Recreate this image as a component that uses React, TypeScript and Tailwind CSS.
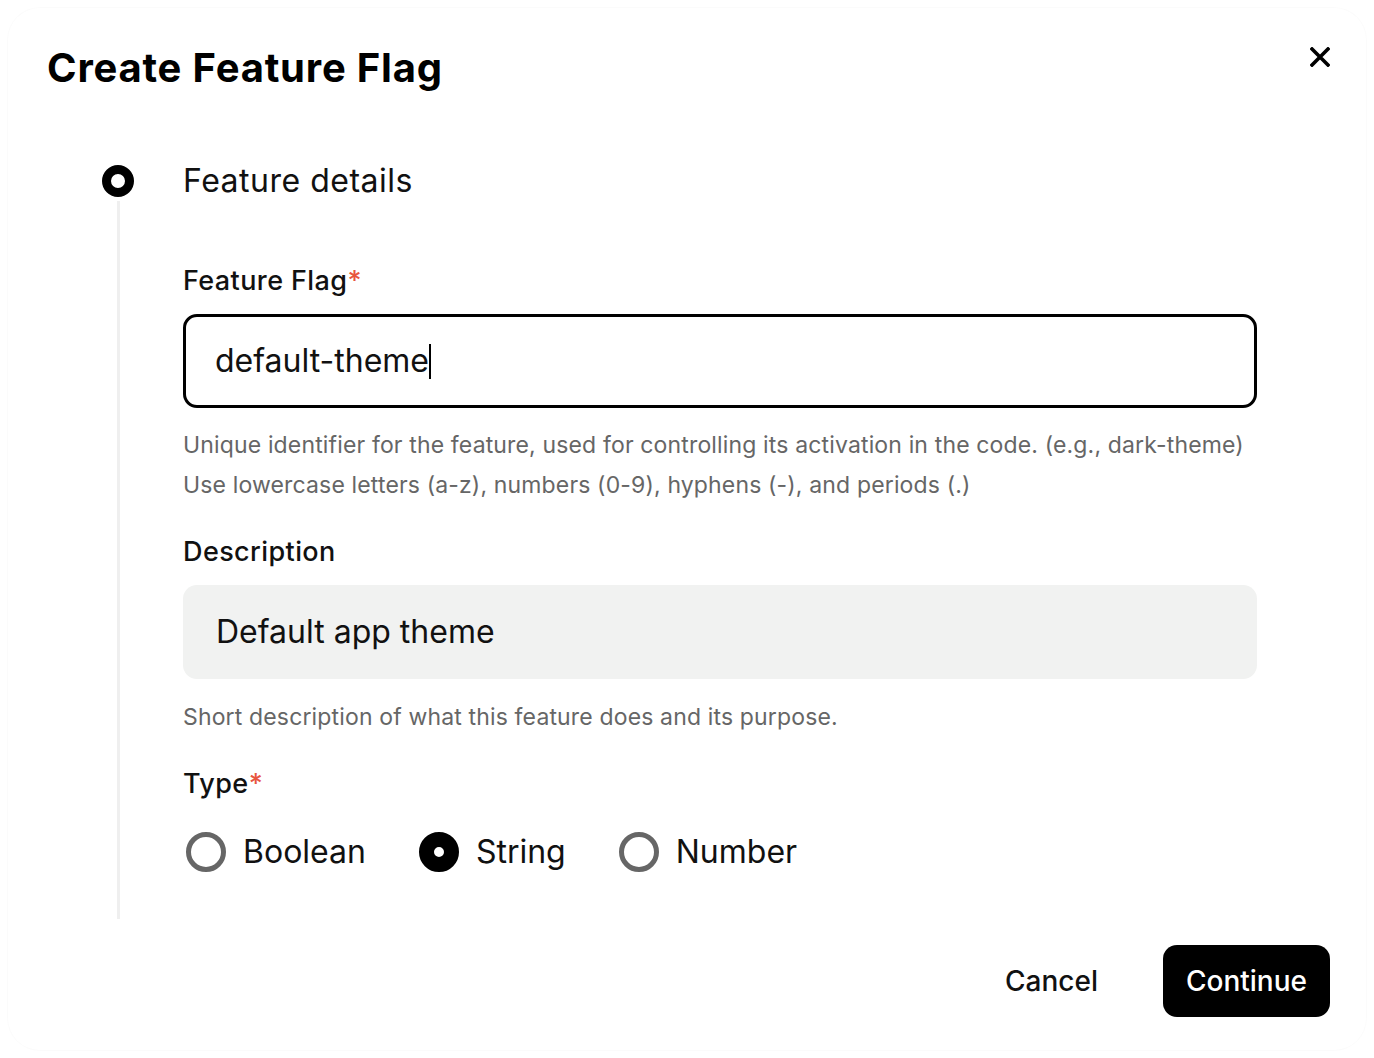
import React from "react";

type FlagType = "boolean" | "string" | "number";

function Required() {
  return <span className="text-[#e8553f]">*</span>;
}

function Radio({ label, checked }: { label: string; checked?: boolean }) {
  return (
    <label className="flex items-center gap-[17px] cursor-pointer">
      <span
        className={`w-10 h-10 rounded-full ${
          checked ? "border-[15px] border-black" : "border-[5px] border-[#666666]"
        }`}
      />
      <span className="text-[32px] leading-10 text-[#111111]">{label}</span>
    </label>
  );
}

export default function App() {
  const selected: FlagType = "string";

  return (
    <div className="min-h-screen bg-white font-['Inter','Liberation_Sans',sans-serif] text-black">
      <div className="m-2 h-[1042px] rounded-[32px] bg-white shadow-[0_0_0_1px_rgba(0,0,0,0.015)] flex flex-col">
        {/* Header */}
        <div className="flex items-start justify-between pt-[40px] pl-[39px] pr-[36px]">
          <h1 className="text-[40px] leading-[40px] font-bold tracking-[0.8px]">Create Feature Flag</h1>
          <button className="-mt-px">
            <svg width="20" height="20" viewBox="0 0 20 20" fill="none">
              <path d="M2 2L18 18M18 2L2 18" stroke="black" strokeWidth="3.6" strokeLinecap="square" />
            </svg>
          </button>
        </div>

        {/* Step */}
        <div className="mt-[77px] flex gap-[49px] pl-[94px] pr-[109px]">
          <div className="w-8 flex flex-col items-center">
            <div className="w-8 h-8 rounded-full border-[9px] border-black shrink-0" />
            <div className="w-[3px] flex-1 bg-[#efefef] mt-1" />
          </div>

          <div className="flex-1 flex flex-col pb-[47px]">
            <div className="h-8 flex items-center text-[32px] leading-8 tracking-[0.5px] text-[#111111]">Feature details</div>

            <div className="mt-[68px] text-[27px] leading-8 font-medium tracking-[0.4px] text-[#111111]">
              Feature Flag<Required />
            </div>
            <div className="mt-[17px] h-[94px] rounded-[14px] border-[3px] border-black flex items-center pl-[29px] text-[32px] text-[#111111]">
              default-theme
              <span className="w-[2px] h-[35px] bg-black" />
            </div>
            <div className="mt-[17px] text-[23px] leading-10 tracking-[0.15px] text-[#666666]">
              <p>Unique identifier for the feature, used for controlling its activation in the code. (e.g., dark-theme)</p>
              <p>Use lowercase letters (a-z), numbers (0-9), hyphens (-), and periods (.)</p>
            </div>

            <div className="mt-[31px] text-[27px] leading-8 font-medium tracking-[0.4px] text-[#111111]">Description</div>
            <div className="mt-[17px] h-[94px] rounded-[14px] bg-[#f1f2f1] flex items-center pl-[33px] text-[32px] text-[#111111]">
              Default app theme
            </div>
            <p className="mt-[18px] text-[23px] leading-10 tracking-[0.15px] text-[#666666]">
              Short description of what this feature does and its purpose.
            </p>

            <div className="mt-[31px] text-[27px] leading-8 font-medium tracking-[0.4px] text-[#111111]">
              Type<Required />
            </div>
            <div className="mt-[32px] h-10 flex items-center gap-[53px] pl-[3px]">
              <Radio label="Boolean" checked={selected === ("boolean" as FlagType)} />
              <Radio label="String" checked={selected === "string"} />
              <Radio label="Number" checked={selected === ("number" as FlagType)} />
            </div>
          </div>
        </div>

        {/* Footer */}
        <div className="mt-[26px] flex items-center justify-end gap-[65px] pr-[36px]">
          <button className="text-[28px] leading-8 font-medium text-[#111111]">Cancel</button>
          <button className="h-[72px] px-[23px] rounded-[14px] bg-black text-white text-[28px] font-medium">Continue</button>
        </div>
      </div>
    </div>
  );
}
